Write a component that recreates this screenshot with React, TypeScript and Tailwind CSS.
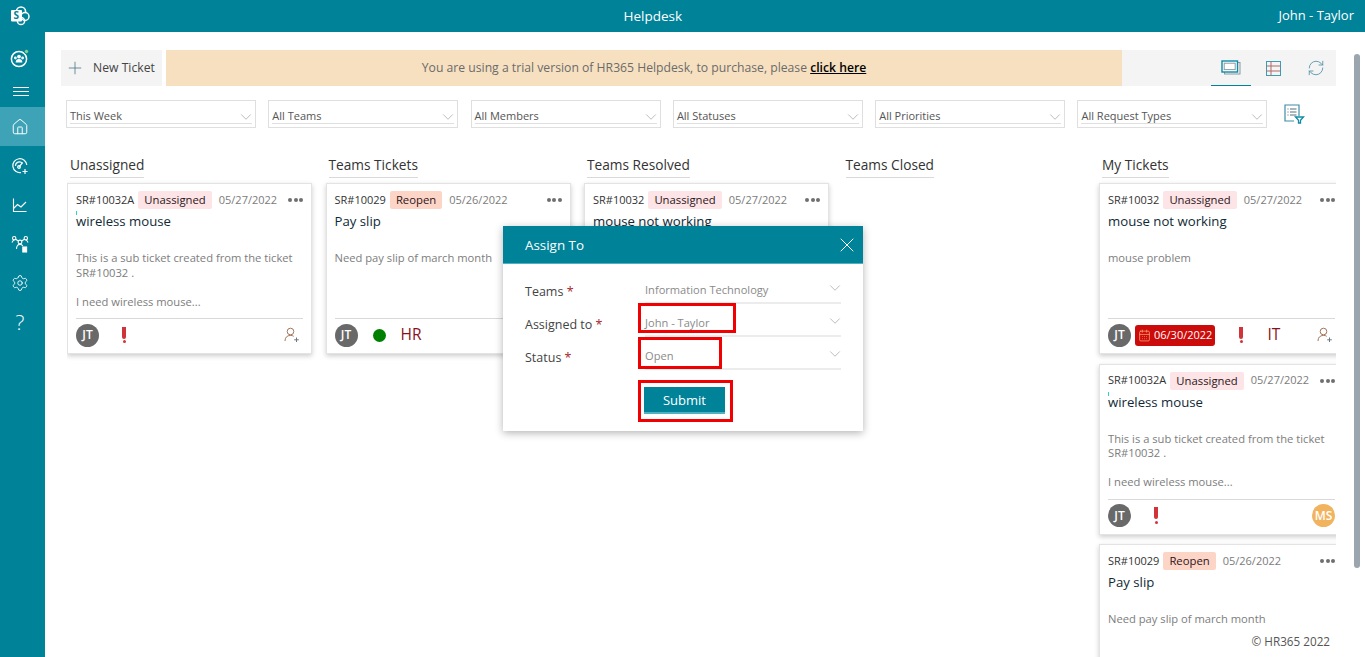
import { ChevronDown, House, Settings, X, Plus, RefreshCw, CalendarDays } from 'lucide-react'

const filters = ['This Week', 'All Teams', 'All Members', 'All Statuses', 'All Priorities', 'All Request Types']

function Logo() {
  return (
    <svg width="20" height="20" viewBox="0 0 20 20">
      <circle cx="11" cy="5.5" r="4.6" fill="none" stroke="#fff" strokeWidth="1.5" />
      <circle cx="15" cy="10.5" r="4" fill="#008299" stroke="#fff" strokeWidth="1.5" />
      <circle cx="11" cy="15" r="3.6" fill="none" stroke="#fff" strokeWidth="1.5" />
      <rect x="1" y="4" width="11" height="11.5" rx="1" fill="#fff" />
      <text x="3.4" y="13.4" fontSize="10" fontWeight="700" fill="#008299" fontFamily="Open Sans, sans-serif">S</text>
    </svg>
  )
}

function GroupIcon() {
  return (
    <svg width="20" height="20" viewBox="0 0 20 20">
      <circle cx="9" cy="11" r="7.6" fill="none" stroke="#fff" strokeWidth="1.5" />
      <circle cx="9" cy="8.6" r="1.9" fill="#fff" />
      <circle cx="5.4" cy="10" r="1.4" fill="#fff" />
      <circle cx="12.6" cy="10" r="1.4" fill="#fff" />
      <path d="M5.6 14.5c0-2.6 1.4-3.6 3.4-3.6s3.4 1 3.4 3.6z" fill="#fff" />
      <circle cx="16.5" cy="3.5" r="2.2" fill="#7fd28c" stroke="#008299" />
    </svg>
  )
}

function GaugeIcon() {
  return (
    <svg width="18" height="18" viewBox="0 0 18 18" fill="none" stroke="#fff" strokeWidth="1.2">
      <path d="M10 15.6A7 7 0 1 1 15.8 8" />
      <path d="M4.5 9a4 4 0 0 1 7-2.8" />
      <path d="M8 10l3.6-4.4" />
      <circle cx="8" cy="10" r="1.3" />
      <path d="M14 12v5M11.5 14.5h5" />
    </svg>
  )
}

function ChartIcon() {
  return (
    <svg width="16" height="16" viewBox="0 0 16 16" fill="none" stroke="#fff" strokeWidth="1.1">
      <path d="M1.5 1.5v13h13" />
      <path d="M1.5 11.5l4-4 3.5 2.5 5-5" />
    </svg>
  )
}

function NetworkIcon() {
  return (
    <svg width="18" height="18" viewBox="0 0 18 18" fill="none" stroke="#fff" strokeWidth="1.1">
      <circle cx="3.2" cy="3.2" r="1.7" />
      <circle cx="9" cy="7" r="1.9" />
      <circle cx="14.8" cy="3.2" r="1.7" />
      <path d="M4.6 4.3l2.8 1.6M13.4 4.3l-2.8 1.6M1 7.5c.4-1.4 1.2-2.2 2.2-2.2M17 7.5c-.4-1.4-1.2-2.2-2.2-2.2" />
      <path d="M5.5 14c0-3 1.4-4.6 3.5-4.6 1.2 0 2.2.5 2.8 1.6" />
      <rect x="11.8" y="12" width="3.8" height="5" fill="#fff" />
    </svg>
  )
}

function CardsIcon() {
  return (
    <svg width="20" height="16" viewBox="0 0 20 16" fill="none">
      <rect x="3.5" y="2.5" width="15.5" height="11.5" stroke="#8a9aa3" />
      <rect x="1" y="1" width="15.5" height="11" fill="#fff" stroke="#0e8aa5" strokeWidth="1.4" />
      <rect x="3.2" y="3.2" width="11" height="6.4" stroke="#8a9aa3" />
    </svg>
  )
}

function GridIcon() {
  return (
    <svg width="15" height="15" viewBox="0 0 15 15" fill="none" strokeWidth="1">
      <rect x="0.5" y="0.5" width="14" height="14" stroke="#3a9cb5" />
      <path d="M5 0.5v14" stroke="#b06a6a" />
      <path d="M0.5 5h14M0.5 10h14" stroke="#b06a6a" />
    </svg>
  )
}

function ListFilterIcon() {
  return (
    <svg width="21" height="20" viewBox="0 0 21 20" fill="none">
      <path d="M15 12V1H1v16h9" stroke="#3f8ea5" strokeWidth="1.2" />
      <path d="M3.5 5h1M6 5h6.5M3.5 8h1M6 8h6.5M3.5 11h1M6 11h6.5" stroke="#55707c" />
      <path d="M11.5 13h8l-3 3.2V19h-2v-2.8z" stroke="#0e8aa5" strokeWidth="1.3" />
    </svg>
  )
}

function AssignIcon() {
  return (
    <svg width="16" height="16" viewBox="0 0 16 16" fill="none" stroke="#a5765c" strokeWidth="1">
      <circle cx="6.5" cy="4.5" r="3.3" />
      <path d="M1 14c0-3.4 2-5.6 5.5-5.6 1.4 0 2.4.3 3.2.9" />
      <path d="M12.5 10.5v4.5M10.2 12.8h4.6" stroke="#6b7a80" />
    </svg>
  )
}

function Dots() {
  return (
    <span className="flex items-center gap-[1.5px]">
      <span className="w-1 h-1 rounded-full bg-[#6f6f6f]" />
      <span className="w-1 h-1 rounded-full bg-[#6f6f6f]" />
      <span className="w-1 h-1 rounded-full bg-[#6f6f6f]" />
    </span>
  )
}

function Avatar({ label, color }: { label: string; color: string }) {
  return (
    <span className={`w-[23px] h-[23px] rounded-full flex items-center justify-center text-white text-[12px] font-semibold shrink-0 ${color}`}>
      {label}
    </span>
  )
}

function Bang() {
  return (
    <span className="w-1 flex flex-col items-center gap-[1.5px]">
      <span className="w-1 h-3 bg-[#d13438] rounded-b-full" />
      <span className="w-[3px] h-[3px] bg-[#d13438] rounded-full" />
    </span>
  )
}

type CardProps = {
  id: string
  badge: string
  date: string
  title: string
  lines: string[]
  footer: React.ReactNode
}

function Card({ id, badge, date, title, lines, footer }: CardProps) {
  const reopen = badge === 'Reopen'
  return (
    <div className="w-[245px] h-[171px] shrink-0 bg-white border border-[#e3e3e3] shadow-[0_2px_5px_rgba(0,0,0,0.2)] px-2 flex flex-col">
      <div className="flex items-center h-[18px] mt-[7px] text-[11px] text-[#333]">
        <span>{id}</span>
        <span className={`ml-[4px] px-[6px] h-[18px] leading-[18px] rounded-[2px] text-[11.3px] text-[#2b1420] ${reopen ? 'bg-[#fdd5c7]' : 'bg-[#fde4e6]'}`}>{badge}</span>
        <span className="ml-[7px] text-[#7b7b7b]">{date}</span>
        <span className="ml-auto"><Dots /></span>
      </div>
      <div className="relative mt-[2px] h-[20px] leading-[20px] text-[13.2px] font-medium text-[#0f2a36]">
        {title}
        {title === 'wireless mouse' && <span className="absolute left-0 top-0 w-px h-1 bg-[#2dd4bf]" />}
      </div>
      <div className="mt-[20px] h-[62px] text-[11.2px] leading-[14.5px] text-[#7d7d7d]">
        {lines.map((l, i) => (
          <div key={i} className={l === '' ? 'h-[14.5px]' : ''}>{l}</div>
        ))}
      </div>
      <div className="mt-[5px] pb-[2px] border-t border-[#d9d9d9] flex-1 flex items-center">{footer}</div>
    </div>
  )
}

const subLines = ['This is a sub ticket created from the ticket', 'SR#10032 .', '', 'I need wireless mouse...']

const subFooter = (
  <>
    <Avatar label="JT" color="bg-[#696969]" />
    <span className="ml-[23px] flex"><Bang /></span>
    <span className="ml-auto mr-[3px]"><AssignIcon /></span>
  </>
)

function Column({ title, children, width }: { title: string; children?: React.ReactNode; width: string }) {
  return (
    <div className={`shrink-0 flex flex-col ${width}`}>
      <div className="h-[25px] shrink-0 ml-[3px] mt-[-3px] mb-[6px]">
        <span className="inline-block border-b border-[#d9d9d9] h-[23px] leading-[20px] text-[13.7px] font-medium text-[#333]">{title}</span>
      </div>
      <div className="flex flex-col gap-[9.5px]">{children}</div>
    </div>
  )
}

function DialogRow({ label, value }: { label: string; value: string }) {
  return (
    <div className="flex h-[33px]">
      <div className="w-[120px] pt-[9px] text-[12.5px] text-[#444]">
        {label} <span className="text-[#a4262c]">*</span>
      </div>
      <div className="w-[196px] border-b-2 border-[#ececec] flex items-center justify-between pt-[2px] mt-[2px] h-[28px] text-[11.1px] text-[#8a8a8a]">
        <span>{value}</span>
        <ChevronDown className="w-[18px] h-[18px] mr-[-3px] mb-[4px] text-[#a6a6a6]" strokeWidth={1} />
      </div>
    </div>
  )
}

export default function App() {
  return (
    <div className="h-screen w-full overflow-hidden flex flex-col bg-white font-['Open_Sans',sans-serif] text-[#333]">
      <header className="h-8 shrink-0 bg-[#008299] flex items-center text-white">
        <div className="w-10 flex justify-center"><Logo /></div>
        <div className="flex-1 text-center text-[13.5px] pr-[13px]">Helpdesk</div>
        <div className="pr-[11px] text-[13px]">John - Taylor</div>
      </header>

      <div className="flex-1 flex min-h-0 relative">
        <aside className="w-[45px] shrink-0 bg-[#008299] flex flex-col items-center text-white">
          <div className="h-[52px] w-full pr-[5px] flex items-center justify-center"><GroupIcon /></div>
          <div className="h-[23px] w-full pr-[3px] flex flex-col items-center justify-center gap-[3px] pb-2">
            <span className="w-4 h-px bg-white" /><span className="w-4 h-px bg-white" /><span className="w-4 h-px bg-white" />
          </div>
          <div className="h-[39px] w-full pr-[5px] bg-[#3fa3b7] flex items-center justify-center"><House className="w-[18px] h-[18px]" strokeWidth={1.3} /></div>
          <div className="h-[39px] w-full pr-[5px] flex items-center justify-center"><GaugeIcon /></div>
          <div className="h-[39px] w-full pr-[5px] flex items-center justify-center"><ChartIcon /></div>
          <div className="h-[39px] w-full pr-[5px] flex items-center justify-center"><NetworkIcon /></div>
          <div className="h-[39px] w-full pr-[5px] flex items-center justify-center"><Settings className="w-[18px] h-[18px]" strokeWidth={1.2} /></div>
          <div className="h-[39px] w-full pr-[5px] pt-[3px] flex items-center justify-center text-[21px] font-light">?</div>
        </aside>

        <main className="w-[1291px] shrink-0 pt-[18px] pl-4 flex flex-col min-h-0">
          <div className="flex h-9 w-[1275px] shrink-0">
            <div className="w-[101px] bg-[#f4f4f4] flex items-center text-[12.2px] text-[#444]">
              <Plus className="w-5 h-5 ml-[4px] mr-[8px] text-[#3f6f80]" strokeWidth={0.9} />
              New Ticket
            </div>
            <div className="ml-1 w-[956px] bg-[#f7e0c0] flex items-center justify-center text-[12.2px] text-[#6b6b6b]">
              <span>You are using a trial version of HR365 Helpdesk, to purchase, please <span className="font-semibold text-black underline">click here</span></span>
            </div>
            <div className="flex-1 bg-[#f4f4f4] flex">
              <div className="ml-[89px] w-10 flex items-center justify-center border-b border-[#008299]"><CardsIcon /></div>
              <div className="w-[44px] flex items-center justify-center"><GridIcon /></div>
              <div className="flex-1 flex items-center justify-center"><RefreshCw className="w-[18px] h-[18px] text-[#4a8ea3]" strokeWidth={1.1} /></div>
            </div>
          </div>

          <div className="flex mt-[14px] ml-[5px] gap-[12.3px] items-center shrink-0">
            {filters.map((f) => (
              <div key={f} className="w-[190px] h-[28px] border border-[#dfdfdf] px-[3px] pt-[6px]">
                <div className="h-[17px] border-b border-[#dfdfdf] flex items-center justify-between pt-[3px] text-[11px] text-[#555]">
                  <span>{f}</span>
                  <ChevronDown className="w-[18px] h-[18px] mr-[-3px] text-[#a6a6a6]" strokeWidth={1} />
                </div>
              </div>
            ))}
            <span className="ml-[4px]"><ListFilterIcon /></span>
          </div>

          <div className="flex mt-[27px] ml-[6px] w-[1269px] gap-[13.5px] overflow-hidden flex-1 min-h-0 pb-2">
            <Column title="Unassigned" width="w-[245px]">
              <Card id="SR#10032A" badge="Unassigned" date="05/27/2022" title="wireless mouse" lines={subLines} footer={subFooter} />
            </Column>
            <Column title="Teams Tickets" width="w-[245px]">
              <Card
                id="SR#10029" badge="Reopen" date="05/26/2022" title="Pay slip"
                lines={['Need pay slip of march month']}
                footer={
                  <>
                    <Avatar label="JT" color="bg-[#696969]" />
                    <span className="ml-[15px] w-[13px] h-[13px] rounded-full bg-[#008000]" />
                    <span className="ml-[15px] text-[15.5px] text-[#8a1020]">HR</span>
                  </>
                }
              />
            </Column>
            <Column title="Teams Resolved" width="w-[245px]">
              <Card id="SR#10032" badge="Unassigned" date="05/27/2022" title="mouse not working" lines={['mouse problem']} footer={<Avatar label="JT" color="bg-[#696969]" />} />
            </Column>
            <Column title="Teams Closed" width="w-[243px]" />
            <Column title="My Tickets" width="w-[245px]">
              <Card
                id="SR#10032" badge="Unassigned" date="05/27/2022" title="mouse not working"
                lines={['mouse problem']}
                footer={
                  <>
                    <Avatar label="JT" color="bg-[#696969]" />
                    <span className="ml-[4px] h-[21px] px-[3px] rounded-[3px] bg-[#cc0b0b] text-white text-[11px] flex items-center gap-[3px]">
                      <CalendarDays className="w-[13px] h-[13px] text-[#ffb27a]" strokeWidth={1.3} />06/30/2022
                    </span>
                    <span className="ml-[24px] flex"><Bang /></span>
                    <span className="ml-[24px] text-[15.5px] text-[#8a1020]">IT</span>
                    <span className="ml-[37px]"><AssignIcon /></span>
                  </>
                }
              />
              <Card
                id="SR#10032A" badge="Unassigned" date="05/27/2022" title="wireless mouse" lines={subLines}
                footer={
                  <>
                    <Avatar label="JT" color="bg-[#696969]" />
                    <span className="ml-[23px] flex"><Bang /></span>
                    <span className="ml-auto"><Avatar label="MS" color="bg-[#f2b35e]" /></span>
                  </>
                }
              />
              <Card id="SR#10029" badge="Reopen" date="05/26/2022" title="Pay slip" lines={['Need pay slip of march month']} footer={null} />
            </Column>
          </div>
        </main>

        <div className="flex-1 pt-[22px] pl-[18px]">
          <div className="w-[6px] h-[514px] rounded-[3px] bg-[#9aa5ad]" />
        </div>

        <div className="absolute right-[35px] bottom-[6px] text-[11.7px] text-[#555]">© HR365 2022</div>

        {/* assign dialog */}
        <div className="absolute left-[503px] top-[194px] w-[360px] h-[205px] bg-white shadow-[0_2px_8px_rgba(0,0,0,0.3)]">
          <div className="h-[38px] bg-[#008299] border-b border-[#4fb0c2] flex items-center justify-between pl-[22px] pr-[4px] text-white text-[13.4px]">
            <span className="pt-[2px]">Assign To</span>
            <X className="w-6 h-6" strokeWidth={1} />
          </div>
          <div className="pl-[22px] pt-[10px]">
            <DialogRow label="Teams" value="Information Technology" />
            <DialogRow label="Assigned to" value="John - Taylor" />
            <DialogRow label="Status" value="Open" />
            <button className="block ml-[119px] mt-[14px] w-[81px] h-[27px] pt-[2px] bg-[#008299] border-b-2 border-[#4fb0c2] text-white text-[13px] font-medium">Submit</button>
          </div>
          <div className="absolute left-[135px] top-[77px] w-[98px] h-[30px] border-[3px] border-[#f00000]" />
          <div className="absolute left-[135px] top-[111px] w-[84px] h-[32px] border-[3px] border-[#f00000]" />
          <div className="absolute left-[135px] top-[154px] w-[95px] h-[42px] border-[3px] border-[#f00000]" />
        </div>
      </div>
    </div>
  )
}
